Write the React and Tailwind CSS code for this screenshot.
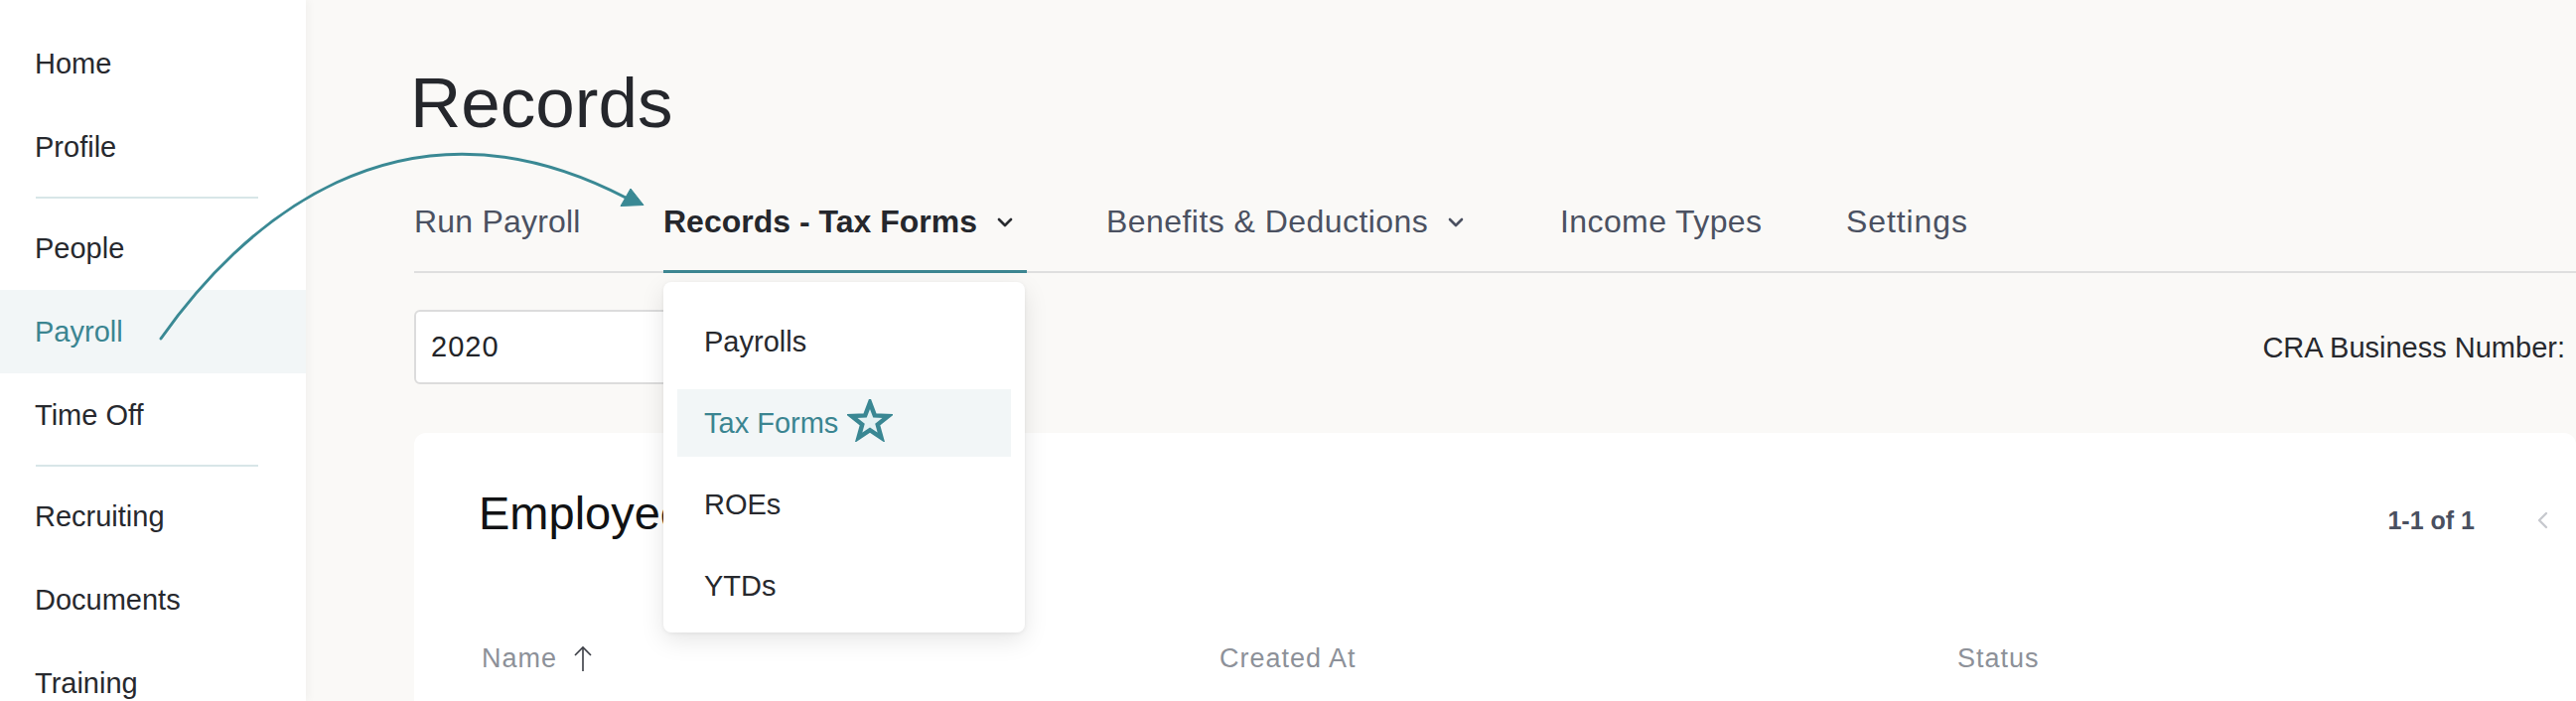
import React from "react";

function Chevron({ className = "" }) {
  return (
    <svg width="16" height="10" viewBox="0 0 16 10" className={className}>
      <polyline points="2,2 8,8 14,2" fill="none" stroke="currentColor" strokeWidth="2.6" strokeLinecap="round" strokeLinejoin="round" />
    </svg>
  );
}

function Star() {
  return (
    <svg width="46" height="43" viewBox="0 0 44 42" className="ml-[9px] -mt-[6px]">
      <polygon
        points="22,3.5 26.7,16 40.1,16.6 29.6,25 33.2,37.9 22,30.5 10.8,37.9 14.4,25 3.9,16.6 17.3,16"
        fill="#e4f1f3"
        stroke="#3a8793"
        strokeWidth="4.4"
        strokeLinejoin="miter"
      />
    </svg>
  );
}

function SideItem({ label, active }) {
  return (
    <div
      className={
        active
          ? "h-[84px] flex items-center pl-[35px] text-[29px] leading-[40px] bg-[#f2f6f7] text-[#3b8591]"
          : "h-[84px] flex items-center pl-[35px] text-[29px] leading-[40px] text-[#27292e]"
      }
    >
      {label}
    </div>
  );
}

function Divider() {
  return (
    <div className="h-[18px] flex items-center">
      <div className="ml-[36px] w-[224px] h-[2px] bg-[#d8e6e8]" />
    </div>
  );
}

export default function App() {
  return (
    <div className="relative flex w-[2594px] h-[706px] overflow-hidden font-['Liberation_Sans',Arial,sans-serif] bg-[#faf9f7]">
      <aside className="relative z-10 w-[308px] shrink-0 h-full bg-white pt-[22px] shadow-[3px_0_8px_rgba(0,0,0,0.035)]">
        <SideItem label="Home" />
        <SideItem label="Profile" />
        <Divider />
        <SideItem label="People" />
        <SideItem label="Payroll" active />
        <SideItem label="Time Off" />
        <Divider />
        <SideItem label="Recruiting" />
        <SideItem label="Documents" />
        <SideItem label="Training" />
      </aside>

      <main className="flex-1 flex flex-col pl-[109px] min-w-0">
        <h1 className="mt-[64px] -ml-[4px] text-[71px] leading-[80px] font-normal text-[#25272c]">Records</h1>

        <nav className="relative z-20 mt-[59px] flex border-b-2 border-[#dfdfdf] text-[32px] leading-[40px]">
          <div className="w-[251px] h-[72px] -mb-[2px] border-b-[3px] border-transparent flex items-start text-[#4b5161] tracking-[0.2px]">
            Run Payroll
          </div>
          <div className="relative w-[366px] mr-[80px] h-[72px] -mb-[2px] border-b-[3px] border-[#3d8692] flex items-start text-[#25272c] font-bold">
            <span>Records - Tax Forms</span>
            <Chevron className="ml-[20px] mt-[16px] text-[#2a2c31]" />
            <div className="absolute left-0 top-[calc(100%+12px)] w-[364px] bg-white rounded-[8px] shadow-[0_8px_24px_rgba(0,0,0,0.10),0_1px_4px_rgba(0,0,0,0.06)] pt-[26px] pb-[13px] px-[14px] flex flex-col gap-[14px] font-normal text-[29px] leading-[40px] text-[#27292e]">
              <div className="h-[68px] flex items-center pl-[27px]">Payrolls</div>
              <div className="h-[68px] flex items-center pl-[27px] bg-[#f2f6f7] text-[#3b8591]">
                <span>Tax Forms</span>
                <Star />
              </div>
              <div className="h-[68px] flex items-center pl-[27px]">ROEs</div>
              <div className="h-[68px] flex items-center pl-[27px]">YTDs</div>
            </div>
          </div>
          <div className="w-[457px] h-[72px] -mb-[2px] border-b-[3px] border-transparent flex items-start text-[#4b5161] tracking-[0.45px]">
            <span>Benefits &amp; Deductions</span>
            <Chevron className="ml-[20px] mt-[16px] text-[#4b5161]" />
          </div>
          <div className="w-[288px] h-[72px] -mb-[2px] border-b-[3px] border-transparent flex items-start text-[#4b5161] tracking-[0.4px]">
            Income Types
          </div>
          <div className="h-[72px] -mb-[2px] border-b-[3px] border-transparent flex items-start text-[#4b5161] tracking-[0.9px]">
            Settings
          </div>
        </nav>

        <div className="mt-[37px] h-[75px] flex items-center justify-between pr-[11px]">
          <div className="w-[440px] h-[75px] bg-white border-2 border-[#dcdcdc] rounded-[6px] pl-[15px] flex items-center text-[29px] tracking-[1px] text-[#222428]">
            2020
          </div>
          <div className="text-[29px] leading-[40px] text-[#27292e]">CRA Business Number:</div>
        </div>

        <section className="mt-[49px] w-[2177px] h-[320px] shrink-0 bg-white rounded-[12px] pl-[65px] pr-[28px] pt-[53px]">
          <div className="flex items-start justify-between">
            <h2 className="text-[47px] leading-[56px] font-normal text-[#111214]">Employee Tax Forms</h2>
            <div className="mt-[20px] h-[30px] flex items-center">
              <span className="text-[25px] leading-[30px] font-bold text-[#4a5060]">1-1 of 1</span>
              <svg width="12" height="18" viewBox="0 0 12 18" className="ml-[62px]">
                <polyline points="10,2 3,9 10,16" fill="none" stroke="#c7c9ce" strokeWidth="2.4" strokeLinecap="round" strokeLinejoin="round" />
              </svg>
            </div>
          </div>
          <div className="mt-[98px] grid grid-cols-[743px_743px_1fr] pl-[3px] text-[27px] leading-[40px] tracking-[1px] text-[#8d9199]">
            <div className="flex items-center">
              <span>Name</span>
              <svg width="20" height="27" viewBox="0 0 20 27" className="ml-[16px]">
                <line x1="10" y1="26" x2="10" y2="2" stroke="#3a3d44" strokeWidth="1.6" />
                <polyline points="2,10 10,2 18,10" fill="none" stroke="#3a3d44" strokeWidth="1.6" />
              </svg>
            </div>
            <div>Created At</div>
            <div>Status</div>
          </div>
        </section>
      </main>

      <svg className="absolute left-0 top-0 pointer-events-none z-30" width="2594" height="706">
        <path d="M162 341 C240 230 400 80 630 199" fill="none" stroke="#3a8994" strokeWidth="3" strokeLinecap="round" />
        <polygon points="625,207.5 635,190 648,206.5" fill="#3a8994" stroke="#3a8994" strokeWidth="1" strokeLinejoin="round" />
      </svg>
    </div>
  );
}
